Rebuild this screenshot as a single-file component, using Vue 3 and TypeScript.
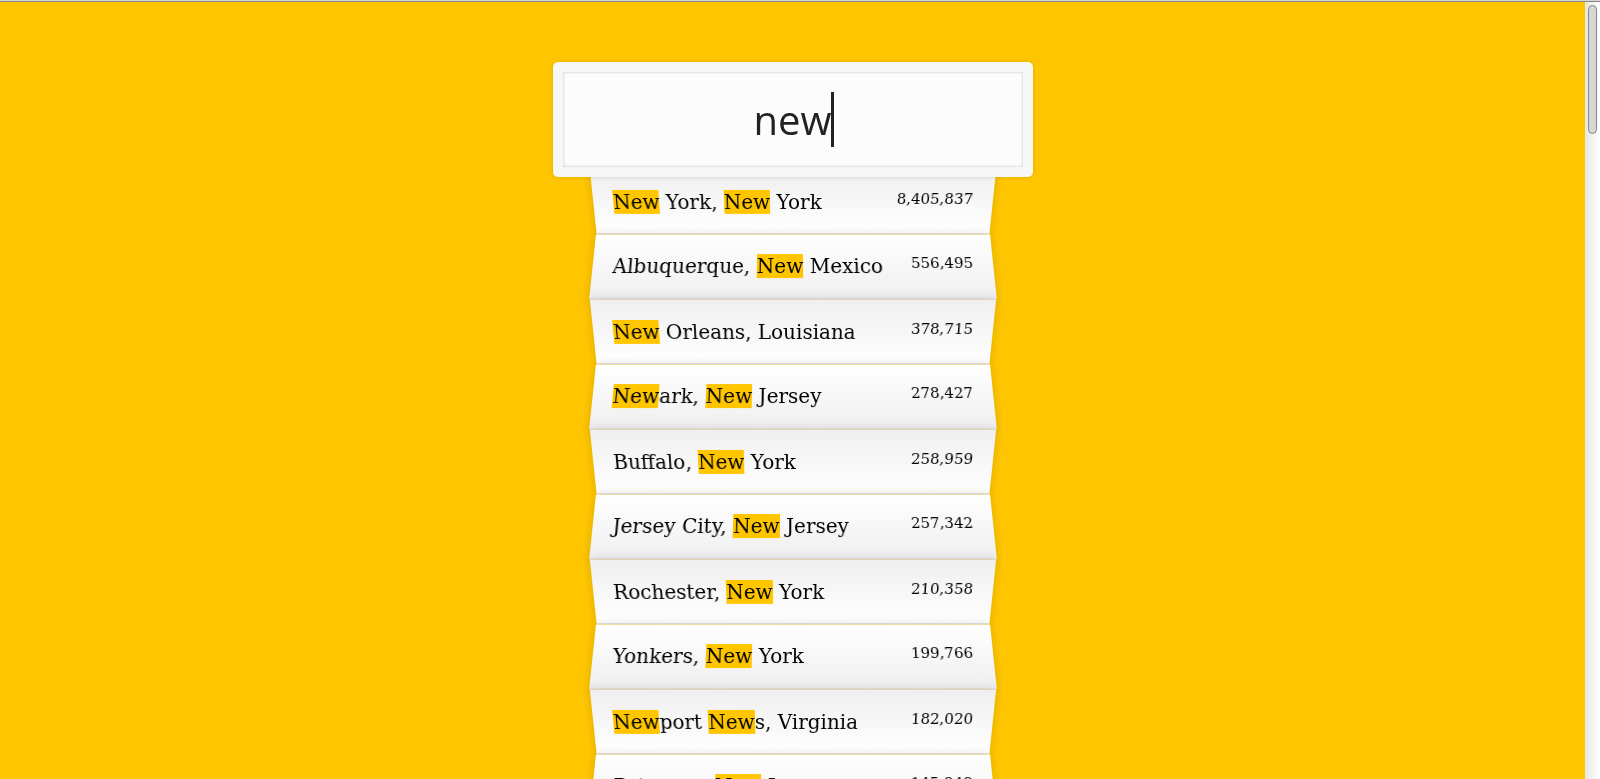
<script setup lang="ts">
import { computed, onMounted, ref, watch } from 'vue'

interface Place {
  city: string
  state: string
  population: number
}

interface Part {
  text: string
  hit: boolean
}

const places: Place[] = [
  { city: 'New York', state: 'New York', population: 8405837 },
  { city: 'Albuquerque', state: 'New Mexico', population: 556495 },
  { city: 'New Orleans', state: 'Louisiana', population: 378715 },
  { city: 'Newark', state: 'New Jersey', population: 278427 },
  { city: 'Buffalo', state: 'New York', population: 258959 },
  { city: 'Jersey City', state: 'New Jersey', population: 257342 },
  { city: 'Rochester', state: 'New York', population: 210358 },
  { city: 'Yonkers', state: 'New York', population: 199766 },
  { city: 'Newport News', state: 'Virginia', population: 182020 },
  { city: 'Paterson', state: 'New Jersey', population: 145948 },
]

const query = ref('new')
const textWidth = ref(0)

const results = computed(() => {
  const q = query.value.trim().toLowerCase()
  return places.filter(
    (p) => p.city.toLowerCase().includes(q) || p.state.toLowerCase().includes(q),
  )
})

function parts(place: Place): Part[] {
  const label = `${place.city}, ${place.state}`
  const q = query.value.trim().replace(/[.*+?^${}()|[\]\\]/g, '\\$&')
  if (!q) return [{ text: label, hit: false }]
  return label
    .split(new RegExp(`(${q})`, 'gi'))
    .map((text, i) => ({ text, hit: i % 2 === 1 }))
    .filter((part) => part.text !== '')
}

function measure() {
  const ctx = document.createElement('canvas').getContext('2d')
  if (!ctx) return
  ctx.font = '40px "Open Sans"'
  textWidth.value = Math.round(ctx.measureText(query.value).width)
}

const caretStyle = computed(() => ({ left: `calc(50% + ${Math.floor(textWidth.value / 2) - 1}px)` }))

onMounted(measure)
watch(query, measure)
</script>

<template>
  <div class="window">
    <div class="edge"></div>
    <div class="body">
      <main class="page">
        <form class="search-form" @submit.prevent>
          <div class="field">
            <input v-model="query" type="text" class="search" aria-label="City or State" />
            <span class="caret" :style="caretStyle"></span>
          </div>
          <ul class="suggestions">
            <li v-for="place in results" :key="place.city">
              <span class="name"><template v-for="(part, i) in parts(place)" :key="i"><span v-if="part.hit" class="hl">{{ part.text }}</span><template v-else>{{ part.text }}</template></template></span>
              <span class="population">{{ place.population.toLocaleString('en-US') }}</span>
            </li>
          </ul>
        </form>
      </main>
      <div class="scrollbar"><div class="thumb"></div></div>
    </div>
  </div>
</template>

<style>
body {
  margin: 0;
  background: #ffc600;
}
</style>

<style scoped>
.window,
.window * {
  box-sizing: border-box;
}

.window {
  display: flex;
  flex-direction: column;
  height: 100vh;
  font-family: 'DejaVu Serif', serif;
  font-size: 20px;
  color: #000;
}

.edge {
  flex: none;
  height: 2px;
  background: #d6d6d6;
  border-bottom: 1px solid #868686;
}

.body {
  flex: 1;
  display: flex;
  min-height: 0;
}

.page {
  flex: 1;
  overflow-x: hidden;
  overflow-y: auto;
  scrollbar-width: none;
  background: #ffc600;
}

.search-form {
  max-width: 400px;
  margin: 50px auto;
}

.field {
  position: relative;
  z-index: 2;
  top: 10px;
  margin: 0 -40px;
}

.search {
  display: block;
  width: 100%;
  margin: 0;
  padding: 20px;
  text-align: center;
  outline: 0;
  border: 10px solid #f7f7f7;
  border-radius: 5px;
  background: #fcfcfc;
  color: #222;
  caret-color: transparent;
  font-family: 'Open Sans', sans-serif;
  font-size: 40px;
  line-height: 55px;
  box-shadow: 0 0 5px rgba(0, 0, 0, 0.12), inset 0 0 3px rgba(0, 0, 0, 0.24);
}

.caret {
  position: absolute;
  top: 30px;
  width: 3px;
  height: 55px;
  background: #222;
}

.suggestions {
  position: relative;
  margin: 0;
  padding: 0;
}

.suggestions li {
  display: flex;
  justify-content: space-between;
  margin: 0;
  padding: 20px;
  list-style: none;
  border-bottom: 1px solid #d8d8d8;
  box-shadow: 0 0 10px rgba(0, 0, 0, 0.14);
}

/* Alternating tilt gives the list its folded-paper look. */
.suggestions li:nth-child(even) {
  transform: perspective(100px) rotateX(3deg) translateY(2px) scale(1.001);
  background: linear-gradient(to bottom, #fff 0%, #efefef 100%);
}

.suggestions li:nth-child(odd) {
  transform: perspective(100px) rotateX(-3deg) translateY(3px);
  background: linear-gradient(to top, #fff 0%, #efefef 100%);
}

.population {
  font-size: 15px;
}

.hl {
  background: #ffc600;
}

.scrollbar {
  flex: none;
  width: 15px;
  padding: 3px;
  background: linear-gradient(to right, #e6e6e6, #fff);
}

.thumb {
  width: 9px;
  height: 129px;
  border: 1px solid #868686;
  border-radius: 5px;
  background: #d6d6d6;
}
</style>
